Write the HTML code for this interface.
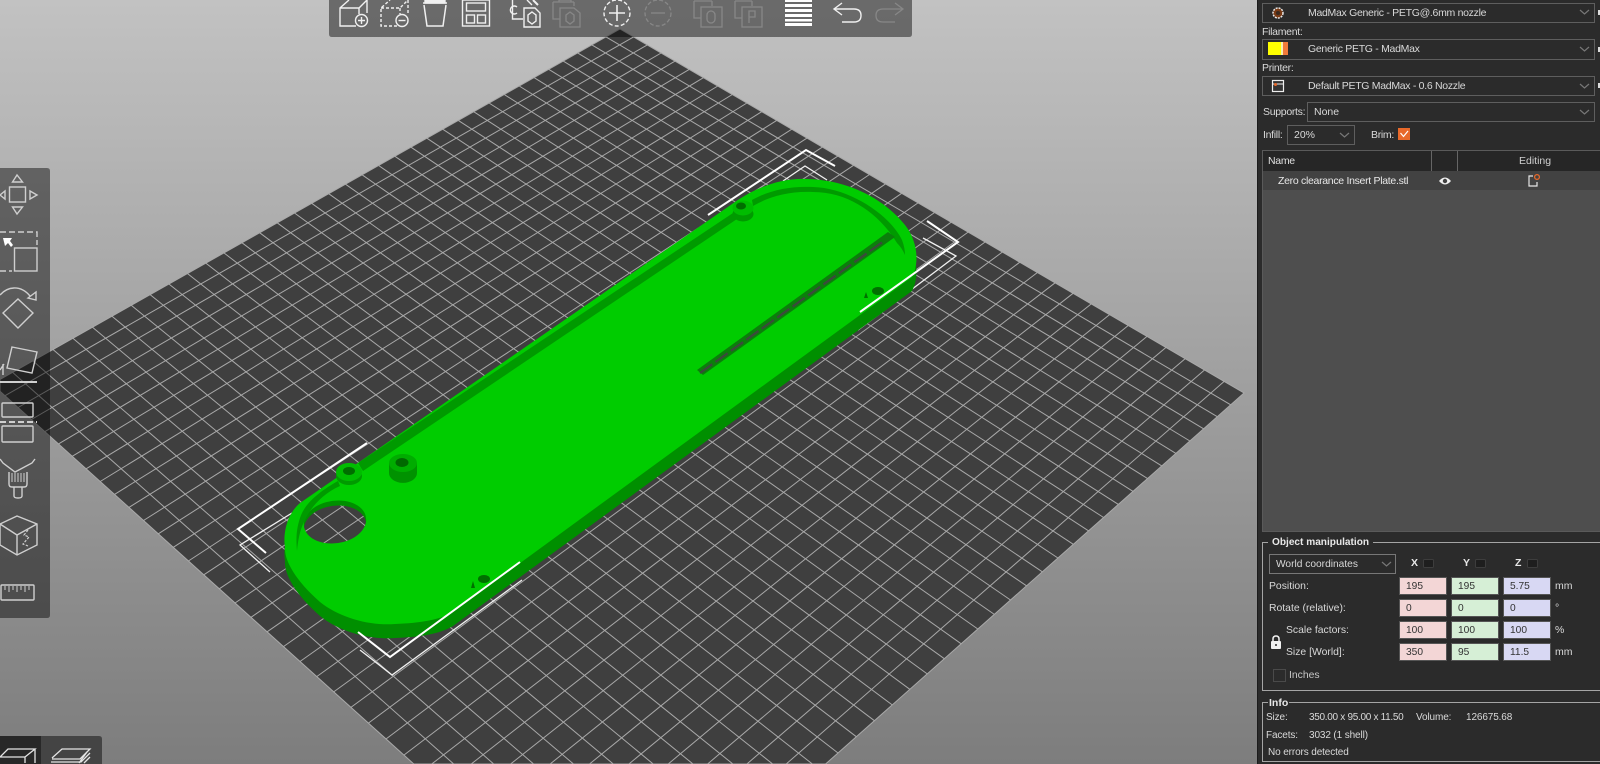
<!DOCTYPE html>
<html lang="en">
<head>
<meta charset="utf-8">
<title>Slicer</title>
<style>
html,body{margin:0;padding:0;width:1600px;height:764px;overflow:hidden;background:#999}
body{position:relative;font-family:"Liberation Sans",sans-serif;filter:blur(.35px)}
#bg{position:absolute;left:0;top:0;width:1600px;height:764px;background:linear-gradient(#c2c2c2,#7d7d7d)}
svg{position:absolute;left:0;top:0;overflow:hidden}
#panel{position:absolute;left:1257px;top:0;width:343px;height:764px;background:#2b2b2b;border-left:1px solid #1c1c1c;box-sizing:border-box}
.t{position:absolute;white-space:nowrap;font-size:10.5px;line-height:14px;color:#d9d9d9}
.c{letter-spacing:-.3px}
.s{font-size:10px;letter-spacing:-.12px}
.b{font-weight:bold;color:#e8e8e8}
.box{position:absolute;box-sizing:border-box;border:1px solid #5e5e5e;background:#2b2b2b}
.inp{position:absolute;box-sizing:border-box;height:18px;width:48px;font-size:10.2px;line-height:18px;padding-left:6px;color:#333;border:1px solid #555}
.x{background:#f3d6d6}.y{background:#d6efd6}.z{background:#d8d8f3}
.gb{position:absolute;box-sizing:border-box;border:1px solid #a5a5a5;border-right:0}
</style>
</head>
<body>
<div id="bg"></div>

<!-- 3D scene -->
<svg width="1600" height="764" viewBox="0 0 1600 764">
  <polygon points="620,29 1244,393 825.6,764 413.8,764 0,391.2 0,379.5" fill="#3f3f3f" stroke="#a9a9a9" stroke-width="1"/>
  <g id="grid" stroke="#a9a9a9" stroke-width="1" fill="none"></g>

  <!-- thin bounding box lines (behind plate) -->
  <g stroke="#f2f2f2" stroke-width="1.3" fill="none">
    <polyline points="292,513 240,545 270,572"/>
    <polyline points="360,650 392,675 522,580"/>
    <polyline points="783,181 805,166 827,180"/>
    <polyline points="923,238 956,256 858,330"/>
  </g>

  <!-- plate side -->
  <path transform="translate(0,14)" fill-rule="evenodd" fill="#008f00"
    d="M735,202 L300,503 C286,515 283,535 285,547 C284,560 295,580 320,602 C340,618 370,626 395,624 C420,623 440,620 453,612 L912,277 C920,262 917,240 905,225 C885,200 850,180 807,179 C780,178 755,188 735,202 Z
       M304,513 A31,21 -8 1 0 366,513 A31,21 -8 1 0 304,513 Z"/>
  <!-- plate top -->
  <path fill-rule="evenodd" fill="#00cc00"
    d="M735,202 L300,503 C286,515 283,535 285,547 C284,560 295,580 320,602 C340,618 370,626 395,624 C420,623 440,620 453,612 L912,277 C920,262 917,240 905,225 C885,200 850,180 807,179 C780,178 755,188 735,202 Z
       M304,522 A31,21 -8 1 0 366,522 A31,21 -8 1 0 304,522 Z"/>

  <!-- grooves -->
  <g fill="#009a00">
    <polygon points="733,213 737,219 363,471 358,463"/>
    <path d="M752,200 C770,190 790,186 813,187 C850,188 890,215 902,240 Q905,248 905,255 Q902,248 897,243 C880,215 850,192 813,192 C790,191 770,196 753,206 Z"/>
    <path d="M338,481 C322,490 305,502 300,518 C296,530 296,540 297,551 C298,540 300,530 304,522 C310,508 322,494 340,486 Z"/>
  </g>

  <!-- slot -->
  <polygon points="697,370 703,375 895,237 888,232" fill="#0b7f0b"/>
  <line x1="700" y1="373" x2="884" y2="241" stroke="#3b4a3b" stroke-width="2.4" stroke-dasharray="15 4"/>

  <!-- bosses -->
  <g>
    <ellipse cx="349" cy="476" rx="13" ry="9" fill="#009a00"/>
    <ellipse cx="349" cy="472" rx="13" ry="9" fill="#00bc00"/>
    <ellipse cx="349" cy="471" rx="6" ry="4" fill="#006e00"/>
    <path d="M389,463 V473 A13.5,9.5 0 0 0 417,473 V463 Z" fill="#009200"/>
    <ellipse cx="403" cy="463" rx="14" ry="9" fill="#00ac00"/>
    <ellipse cx="402" cy="462.500" rx="6.500" ry="4.500" fill="#006800"/>
    <ellipse cx="743" cy="214" rx="10.500" ry="7.500" fill="#009a00"/>
    <ellipse cx="743" cy="208" rx="10.500" ry="7.500" fill="#00bc00"/>
    <ellipse cx="741" cy="206" rx="5" ry="3.500" fill="#006e00"/>
    <ellipse cx="484" cy="579" rx="6" ry="4" fill="#007000"/>
    <polygon points="471,588 473,581 475,588" fill="#007000"/>
    <ellipse cx="878" cy="291" rx="6" ry="4" fill="#007000"/>
    <polygon points="864,298 866,292 868,298" fill="#007000"/>
  </g>

  <!-- thick bounding box lines -->
  <g stroke="#fff" stroke-width="2" fill="none">
    <polyline points="367,443 238,529 266,553"/>
    <polyline points="358,632 390,657 520,562"/>
    <polyline points="708,215 806,150 835,166"/>
    <polyline points="927,221 958,242 860,312"/>
  </g>

  <!-- left toolbar -->
  <path d="M0,168 H47 Q50,168 50,171 V615 Q50,618 47,618 H0 Z" fill="#000" fill-opacity=".45"/>
  <g fill="none" stroke="#cfcfcf" stroke-width="1.4">
    <!-- move -->
    <rect x="9.500" y="187" width="16" height="15"/>
    <polygon points="17,175 12.500,182 22.500,182"/>
    <polygon points="17,214 12.500,207 22.500,207"/>
    <polygon points="0,195 5,191 5,199"/>
    <polygon points="37,195 30,191 30,199"/>
    <!-- scale -->
    <path d="M0,232 H37 V245 M0,271 H12" stroke-dasharray="6 3"/>
    <rect x="14.500" y="248" width="22.500" height="23"/>
    <polygon points="3,238 12,238 10,241 13,245 11,247 8,243 5,246" fill="#fff" stroke="none"/>
    <!-- rotate -->
    <polygon points="18,299 33,313 18,328 3,313"/>
    <path d="M0,295 C7,287 20,284 30,296"/>
    <polygon points="28,298 36,292 36,300"/>
    <!-- place on face -->
    <polygon points="12,347 37,352 32,373 7,368"/>
    <path d="M0,370 L4,364 M3,375 L3,364"/>
    <path d="M0,382 H37" stroke-width="2"/>
    <!-- cut -->
    <rect x="2" y="403" width="31" height="14" rx="1"/>
    <path d="M0,422 H37" stroke-dasharray="6 3" stroke-width="2"/>
    <rect x="2" y="426" width="31" height="16" rx="1"/>
    <!-- brush -->
    <path d="M0,459 L3,463 L15,472 L32,463 L35,459"/>
    <path d="M9,472 V484 Q9,487 12,487 H24 Q27,487 27,484 V472 M14,487 V496 Q14,498 18,498 Q22,498 22,496 V487"/>
    <path d="M12,473 V482 M15,473 V482 M18,473 V482 M21,473 V482 M24,473 V482" stroke-width="1"/>
    <!-- cube -->
    <polygon points="17,516 37,524 37,545 17,555 0,545 0,524"/>
    <path d="M0,524 L17,535 L37,524 M17,535 V555"/>
    <path d="M28,530 L24,535 L29,537 L23,544 L28,546" stroke-dasharray="2.500 1.500" stroke-width="1.200"/>
    <!-- ruler -->
    <rect x="1" y="585" width="33" height="15" rx="1"/>
    <path d="M5,586 V590 M9,586 V592 M13,586 V590 M17,586 V592 M21,586 V590 M25,586 V592 M29,586 V590" stroke-width="1"/>
  </g>

  <!-- top toolbar -->
  <path d="M329,0 H912 V34 Q912,37 909,37 H332 Q329,37 329,34 Z" fill="#000" fill-opacity=".45"/>
  <g fill="none" stroke="#f0f0f0" stroke-width="1.400">
    <!-- add -->
    <path d="M356,26 H340 V8 L349,0 M340,8 H359 L367,0 M359,8 V14 M367,0 V13"/>
    <circle cx="361.500" cy="20.500" r="6"/>
    <path d="M361.500,17 V24 M358,20.500 H365"/>
    <!-- delete -->
    <path d="M397,26 H381 V8 L390,0 M381,8 H400 L408,0 M400,8 V14 M408,0 V13" stroke-dasharray="3 2"/>
    <circle cx="402" cy="20.500" r="6"/>
    <path d="M398.500,20.500 H405.500"/>
    <!-- trash -->
    <path d="M424,5 L427,26 H443 L446,5 M423,3 H447" stroke-width="1.500"/>
    <path d="M425,0 H445 V3 H425 Z" fill="#f0f0f0"/>
    <!-- arrange -->
    <rect x="462.500" y="0" width="27" height="26"/>
    <rect x="466.500" y="3" width="19" height="8"/>
    <rect x="466.500" y="15" width="8" height="8"/>
    <rect x="477.500" y="15" width="8" height="8"/>
    <!-- copy -->
    <path d="M512.500,0 V19 H523 M527,0 L532,5"/>
    <path d="M517,7 A4,4 0 1 0 517,13"/>
    <path d="M524,8 H535 L540,13 V27 H524 Z"/>
    <polygon points="532,12 536,15 536,21 532,24 528,21 528,15"/>
    <path d="M533,0 L538,5" stroke-width="2"/>
    <!-- add circle -->
    <circle cx="617" cy="13" r="13" stroke-dasharray="4 2.200"/>
    <path d="M609,13 H625 M617,5 V21" stroke-width="1.600"/>
    <!-- undo -->
    <path d="M842,3 L834,9 L842,15 M834,9 H854 Q861,9 861,15.500 Q861,22 854,22 H842"/>
  </g>
  <!-- layers -->
  <g fill="#fff">
    <rect x="785" y="0" width="27" height="2"/>
    <rect x="785" y="4" width="27" height="3"/>
    <rect x="785" y="9" width="27" height="3"/>
    <rect x="785" y="14" width="27" height="3"/>
    <rect x="785" y="19" width="27" height="2.500"/>
    <rect x="785" y="23" width="27" height="3"/>
  </g>
  <g fill="none" stroke="#f0f0f0" stroke-width="1.300" opacity=".22">
    <path d="M553,2 V19 H560 M574,2 V6 M553,2 H574"/>
    <path d="M559,2 V0 H571 V2"/>
    <path d="M560,8 H574 L580,13 V27 H560 Z"/>
    <polygon points="570,12 574,15 574,21 570,24 566,21 566,15"/>
    <circle cx="658" cy="13" r="13" stroke-dasharray="4 2.200"/>
    <path d="M651,13 H665"/>
    <path d="M694,1 V18 H701 M712,1 V6 M694,1 H712"/>
    <rect x="701" y="7" width="21" height="20"/>
    <rect x="707" y="11" width="8" height="12" rx="4"/>
    <path d="M735,1 V18 H742 M752,1 V6 M735,1 H752"/>
    <rect x="742" y="7" width="20" height="20"/>
    <path d="M749,23 V11 H755 V17 H749"/>
    <path d="M895,3 L903,9 L895,15 M903,9 H883 Q876,9 876,15.500 Q876,22 883,22 H895"/>
  </g>

  <!-- bottom tabs -->
  <path d="M0,736 H41 V764 H0 Z" fill="#282828"/>
  <path d="M41,736 H99 Q102,736 102,739 V764 H41 Z" fill="#444"/>
  <g fill="none" stroke="#e4e4e4" stroke-width="1.300">
    <path d="M0,757 L8,749 H35 L25,757 H0 M35,749 V763 M25,757 V763"/>
    <path d="M52,758 L62,749 H90 L80,759 H52"/>
    <path d="M51,762 H81 L90,753 M87,752 L79,763 M90,757 L84,763"/>
  </g>
</svg>

<!-- Right side panel -->
<div id="panel"></div>

<div class="box" style="left:1262px;top:3px;width:333px;height:20px"></div>
<div class="t c" style="left:1308px;top:6px">MadMax Generic - PETG@.6mm nozzle</div>
<div class="t c" style="left:1262px;top:25px">Filament:</div>
<div class="box" style="left:1262px;top:39px;width:333px;height:21px"></div>
<div class="t c" style="left:1308px;top:42px">Generic PETG - MadMax</div>
<div class="t c" style="left:1262px;top:61px">Printer:</div>
<div class="box" style="left:1262px;top:76px;width:333px;height:20px"></div>
<div class="t c" style="left:1308px;top:79px">Default PETG MadMax - 0.6 Nozzle</div>
<div class="t c" style="left:1263px;top:105px">Supports:</div>
<div class="box" style="left:1307px;top:102px;width:288px;height:20px"></div>
<div class="t" style="left:1314px;top:105px">None</div>
<div class="t c" style="left:1263px;top:128px">Infill:</div>
<div class="box" style="left:1287px;top:125px;width:68px;height:20px"></div>
<div class="t" style="left:1294px;top:128px">20%</div>
<div class="t c" style="left:1371px;top:128px">Brim:</div>

<!-- list -->
<div style="position:absolute;left:1262px;top:150px;width:338px;height:382px;background:#4e4e4e;border:1px solid #5a5a5a;border-right:0;box-sizing:border-box"></div>
<div style="position:absolute;left:1263px;top:151px;width:337px;height:20px;background:#262626"></div>
<div style="position:absolute;left:1263px;top:171px;width:337px;height:19px;background:#424242"></div>
<div style="position:absolute;left:1431px;top:151px;width:1px;height:20px;background:#666"></div>
<div style="position:absolute;left:1457px;top:151px;width:1px;height:20px;background:#666"></div>
<div class="t c" style="left:1268px;top:154px;color:#e0e0e0">Name</div>
<div class="t" style="left:1519px;top:154px;color:#d0d0d0">Editing</div>
<div class="t c" style="left:1278px;top:174px;color:#e8e8e8">Zero clearance Insert Plate.stl</div>

<!-- object manipulation -->
<div class="gb" style="left:1262px;top:542px;width:338px;height:149px"></div>
<div class="t b" style="left:1268px;top:536px;padding:0 4px;background:#2b2b2b;font-size:10.1px">Object manipulation</div>
<div class="box" style="left:1269px;top:554px;width:127px;height:20px;border-color:#777"></div>
<div class="t" style="left:1276px;top:558px;font-size:10.2px">World coordinates</div>
<div class="t b" style="left:1411px;top:556px">X</div>
<div class="t b" style="left:1463px;top:556px">Y</div>
<div class="t b" style="left:1515px;top:556px">Z</div>

<div class="t" style="left:1269px;top:580px;font-size:10.4px">Position:</div>
<div class="t" style="left:1269px;top:602px;font-size:10.4px">Rotate (relative):</div>
<div class="t" style="left:1286px;top:624px;font-size:10.4px">Scale factors:</div>
<div class="t" style="left:1286px;top:646px;font-size:10.4px">Size [World]:</div>

<div class="inp x" style="left:1399px;top:577px">195</div><div class="inp y" style="left:1451px;top:577px">195</div><div class="inp z" style="left:1503px;top:577px">5.75</div>
<div class="inp x" style="left:1399px;top:599px">0</div><div class="inp y" style="left:1451px;top:599px">0</div><div class="inp z" style="left:1503px;top:599px">0</div>
<div class="inp x" style="left:1399px;top:621px">100</div><div class="inp y" style="left:1451px;top:621px">100</div><div class="inp z" style="left:1503px;top:621px">100</div>
<div class="inp x" style="left:1399px;top:643px">350</div><div class="inp y" style="left:1451px;top:643px">95</div><div class="inp z" style="left:1503px;top:643px">11.5</div>

<div class="t" style="left:1555px;top:579px">mm</div>
<div class="t" style="left:1555px;top:601px">°</div>
<div class="t" style="left:1555px;top:623px">%</div>
<div class="t" style="left:1555px;top:645px">mm</div>
<div style="position:absolute;left:1273px;top:669px;width:11px;height:11px;border:1px solid #4a4a4a"></div>
<div class="t" style="left:1289px;top:669px;font-size:10.4px;color:#c8c8c8">Inches</div>

<!-- info -->
<div class="gb" style="left:1262px;top:702px;width:338px;height:60px"></div>
<div class="t b" style="left:1268px;top:696px;padding:0 1px;background:#2b2b2b">Info</div>
<div class="t s" style="left:1266px;top:711px">Size:</div>
<div class="t s" style="left:1309px;top:711px;letter-spacing:-.3px">350.00 x 95.00 x 11.50</div>
<div class="t s" style="left:1416px;top:711px">Volume:</div>
<div class="t s" style="left:1466px;top:711px">126675.68</div>
<div class="t s" style="left:1266px;top:729px">Facets:</div>
<div class="t s" style="left:1309px;top:729px">3032 (1 shell)</div>
<div class="t s" style="left:1268px;top:746px">No errors detected</div>

<!-- panel icons -->
<svg width="1600" height="764" viewBox="0 0 1600 764" style="pointer-events:none">
  <!-- combo chevrons -->
  <g fill="none" stroke="#777" stroke-width="1.200">
    <path d="M1580,10 L1584.500,14 L1589,10"/>
    <path d="M1580,47 L1584.500,51 L1589,47"/>
    <path d="M1580,84 L1584.500,88 L1589,84"/>
    <path d="M1580,110 L1584.500,114 L1589,110"/>
    <path d="M1340,133 L1344.500,137 L1349,133"/>
    <path d="M1382,562 L1386.500,566 L1391,562"/>
  </g>
  <!-- side marks -->
  <g fill="#ddd">
    <rect x="1598" y="10" width="2" height="5"/>
    <rect x="1598" y="47" width="2" height="5"/>
    <rect x="1598" y="83" width="2" height="5"/>
  </g>
  <!-- print settings icon -->
  <circle cx="1278" cy="13" r="5" fill="#7a3a14" stroke="#e8e8e8" stroke-width="1.500" stroke-dasharray="2 1"/>
  <circle cx="1278" cy="13" r="2" fill="#3a2a20"/>
  <!-- filament swatch -->
  <rect x="1268" y="42" width="13" height="13" fill="#ffff00"/>
  <rect x="1281" y="42" width="2" height="13" fill="#f5f0b0"/>
  <rect x="1283" y="42" width="5" height="13" fill="#f07a3a"/>
  <!-- printer icon -->
  <rect x="1272.500" y="80.500" width="11" height="11" fill="#333" stroke="#eee" stroke-width="1.200"/>
  <path d="M1273,84 H1283" stroke="#eee"/>
  <circle cx="1275.500" cy="84.500" r="1.500" fill="#e8692a"/>
  <!-- brim checkbox -->
  <rect x="1398" y="128" width="12" height="12" fill="#e8692a"/>
  <path d="M1400.500,133 L1403.500,136.500 L1408,131" fill="none" stroke="#fff" stroke-width="1.200"/>
  <!-- eye -->
  <path d="M1439,181 Q1445,174 1451,181 Q1445,188 1439,181 Z" fill="#f0f0f0"/>
  <circle cx="1445" cy="181" r="2.200" fill="#424242"/>
  <!-- edit icon -->
  <path d="M1533,176 H1529 V186 H1537 V182" fill="none" stroke="#e6e6e6" stroke-width="1.200"/>
  <circle cx="1537" cy="177" r="2.400" fill="none" stroke="#e8692a" stroke-width="1.300"/>
  <!-- axis lock mini icons -->
  <g fill="#1e1e1e" stroke="#3d3d3d">
    <rect x="1423.500" y="559.500" width="10" height="8" rx="1"/>
    <rect x="1475.500" y="559.500" width="10" height="8" rx="1"/>
    <rect x="1527.500" y="559.500" width="10" height="8" rx="1"/>
  </g>
  <!-- lock -->
  <rect x="1271" y="641" width="10" height="8" rx="1" fill="#f2f2f2"/>
  <path d="M1273,641 V639 Q1273,636 1276,636 Q1279,636 1279,639 V641" fill="none" stroke="#f2f2f2" stroke-width="1.500"/>
  <circle cx="1276" cy="645" r="1" fill="#2b2b2b"/>
</svg>

<script>
(function(){
  var P=[[620,29],[1244,393],[618,948],[-8,384]],NU=38,NV=37;
  var x0=P[0][0],y0=P[0][1],x1=P[1][0],y1=P[1][1],x2=P[2][0],y2=P[2][1],x3=P[3][0],y3=P[3][1];
  var dx1=x1-x2,dx2=x3-x2,sx=x0-x1+x2-x3,dy1=y1-y2,dy2=y3-y2,sy=y0-y1+y2-y3;
  var den=dx1*dy2-dx2*dy1,g=(sx*dy2-dx2*sy)/den,h=(dx1*sy-sx*dy1)/den;
  var a=x1-x0+g*x1,b=x3-x0+h*x3,d=y1-y0+g*y1,e=y3-y0+h*y3;
  function m(u,v){var w=g*u+h*v+1;return [(a*u+b*v+x0)/w,(d*u+e*v+y0)/w];}
  function seg(A,B){
    var t0=0,t1=1,dx=B[0]-A[0],dy=B[1]-A[1],r;
    if(dx!==0){r=(0-A[0])/dx;if(dx>0)t0=Math.max(t0,r);else t1=Math.min(t1,r);}
    if(dy!==0){r=(764-A[1])/dy;if(dy>0)t1=Math.min(t1,r);else t0=Math.max(t0,r);}
    if(t0>=t1)return '';
    return '<polyline points="'+(A[0]+dx*t0).toFixed(1)+','+(A[1]+dy*t0).toFixed(1)+' '+(A[0]+dx*t1).toFixed(1)+','+(A[1]+dy*t1).toFixed(1)+'"/>';
  }
  var s='',i;
  for(i=1;i<NU;i++){s+=seg(m(i/NU,0),m(i/NU,1));}
  for(i=1;i<NV;i++){s+=seg(m(0,i/NV),m(1,i/NV));}
  document.getElementById('grid').innerHTML=s;
})();
</script>
</body>
</html>
